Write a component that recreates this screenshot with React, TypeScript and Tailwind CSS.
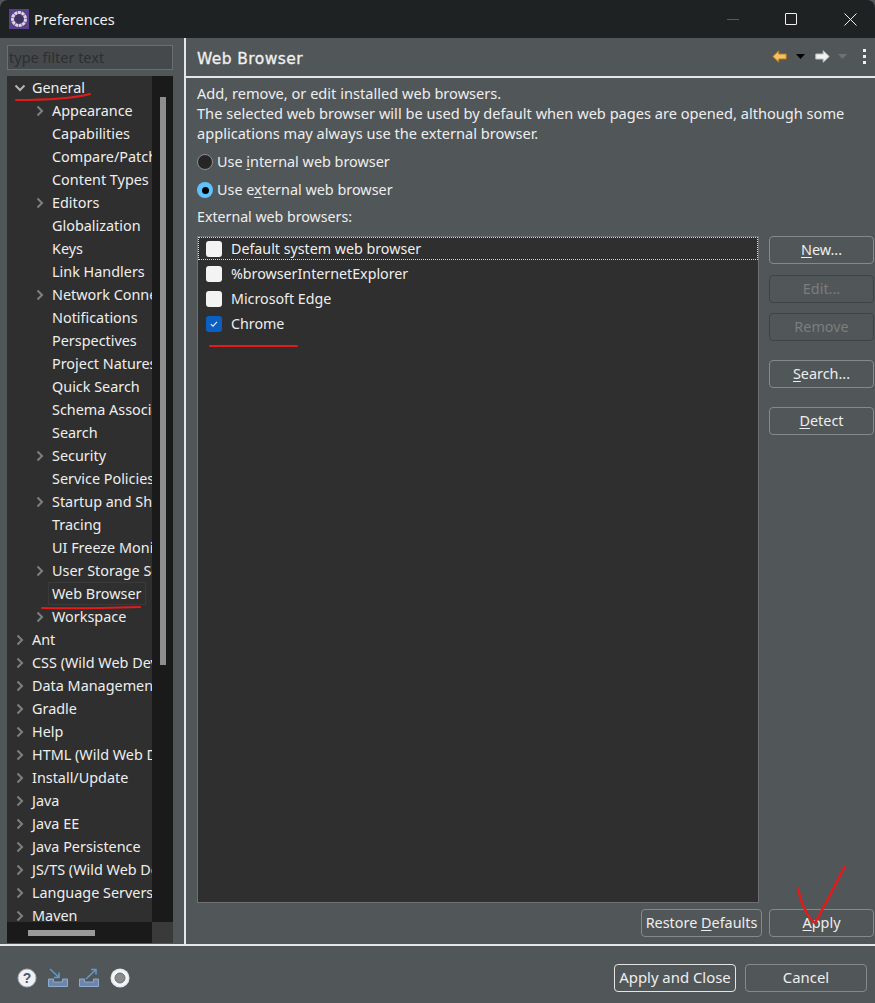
import React from "react";

type Row = { t: string; d: 0 | 1; c?: "open" | "closed" };
const rows: Row[] = [
  { t: "General", d: 0, c: "open" },
  { t: "Appearance", d: 1, c: "closed" },
  { t: "Capabilities", d: 1 },
  { t: "Compare/Patch", d: 1 },
  { t: "Content Types", d: 1 },
  { t: "Editors", d: 1, c: "closed" },
  { t: "Globalization", d: 1 },
  { t: "Keys", d: 1 },
  { t: "Link Handlers", d: 1 },
  { t: "Network Connections", d: 1, c: "closed" },
  { t: "Notifications", d: 1 },
  { t: "Perspectives", d: 1 },
  { t: "Project Natures", d: 1 },
  { t: "Quick Search", d: 1 },
  { t: "Schema Associations", d: 1 },
  { t: "Search", d: 1 },
  { t: "Security", d: 1, c: "closed" },
  { t: "Service Policies", d: 1 },
  { t: "Startup and Shutdown", d: 1, c: "closed" },
  { t: "Tracing", d: 1 },
  { t: "UI Freeze Monitoring", d: 1 },
  { t: "User Storage Service", d: 1, c: "closed" },
  { t: "Web Browser", d: 1 },
  { t: "Workspace", d: 1, c: "closed" },
  { t: "Ant", d: 0, c: "closed" },
  { t: "CSS (Wild Web Developer)", d: 0, c: "closed" },
  { t: "Data Management", d: 0, c: "closed" },
  { t: "Gradle", d: 0, c: "closed" },
  { t: "Help", d: 0, c: "closed" },
  { t: "HTML (Wild Web Developer)", d: 0, c: "closed" },
  { t: "Install/Update", d: 0, c: "closed" },
  { t: "Java", d: 0, c: "closed" },
  { t: "Java EE", d: 0, c: "closed" },
  { t: "Java Persistence", d: 0, c: "closed" },
  { t: "JS/TS (Wild Web Developer)", d: 0, c: "closed" },
  { t: "Language Servers", d: 0, c: "closed" },
  { t: "Maven", d: 0, c: "closed" },
];

function Twisty({ open }: { open?: boolean }) {
  return (
    <svg width="12" height="12" viewBox="0 0 12 12" fill="none" stroke={open ? "#b5b5b5" : "#7d8082"} strokeWidth="2">
      {open ? <path d="M1.5 3.5 L6 8 L10.5 3.5" /> : <path d="M3.5 1.5 L8 6 L3.5 10.5" />}
    </svg>
  );
}

function TreeRow({ r }: { r: Row }) {
  const selected = r.t === "Web Browser";
  return (
    <div className={`h-[23px] flex items-center whitespace-nowrap ${r.d ? "pl-[27px]" : "pl-[7px]"}`}>
      <span className="w-[18px] h-[12px] shrink-0 flex items-center justify-start">
        {r.c && <Twisty open={r.c === "open"} />}
      </span>
      <span className={selected ? "border border-[#3a3a3a] px-[3px] -ml-[4px] h-[23px] leading-[21px]" : ""}>{r.t}</span>
    </div>
  );
}

function Btn({ children, disabled, strong, className = "" }: { children: React.ReactNode; disabled?: boolean; strong?: boolean; className?: string }) {
  const tone = disabled
    ? "border-[#3f4345] text-[#7a7e80]"
    : strong
    ? "border-[#e4e4e4] text-[#eeeeee]"
    : "border-[#85898b] text-[#eeeeee]";
  return (
    <div className={`h-[28px] rounded-[4px] border flex items-center justify-center whitespace-nowrap ${tone} ${className}`}>
      {children}
    </div>
  );
}

function Check({ checked }: { checked?: boolean }) {
  return checked ? (
    <span className="w-[16px] h-[16px] rounded-[3px] bg-[#0a5fc0] flex items-center justify-center shrink-0">
      <svg width="10" height="10" viewBox="0 0 10 10" fill="none" stroke="#e8f0fa" strokeWidth="1.1">
        <path d="M1.8 5.2 L4 7.2 L8 2.8" />
      </svg>
    </span>
  ) : (
    <span className="w-[16px] h-[16px] rounded-[3px] bg-[#f3f3f3] shrink-0" />
  );
}

function ListRow({ label, checked, focus }: { label: string; checked?: boolean; focus?: boolean }) {
  return (
    <div className={`flex items-center gap-[9px] pl-[7px] text-[14.25px] ${focus ? "h-[23px] mb-px border border-dotted border-[#d8d8d8]" : "h-[25px] border border-transparent"}`}>
      <Check checked={checked} />
      <span>{label}</span>
    </div>
  );
}

function Arrow({ color, edge, flip }: { color: string; edge: string; flip?: boolean }) {
  return (
    <svg width="15" height="13" viewBox="0 0 15 13" style={flip ? { transform: "scaleX(-1)" } : undefined}>
      <path d="M0.8 6.5 L6.8 0.8 V4 H14.2 V9 H6.8 V12.2 Z" fill={color} stroke={edge} strokeWidth="1" />
    </svg>
  );
}

function Caret({ color }: { color: string }) {
  return (
    <svg width="9" height="5" viewBox="0 0 9 5">
      <path d="M0 0 H9 L4.5 5 Z" fill={color} />
    </svg>
  );
}

export default function App() {
  return (
    <div className="relative w-[875px] h-[1003px] overflow-hidden flex flex-col bg-[#515658] text-[#eeeeee] text-[14.4px] font-['Noto_Sans',sans-serif]">
      {/* Title bar */}
      <div className="h-[38px] shrink-0 bg-[#1f2223] flex items-center pl-[9px] rounded-t-[8px]">
        <svg width="20" height="20" viewBox="0 0 20 20">
          <rect width="20" height="20" fill="#5a3f8a" />
          <circle cx="10" cy="10" r="6.5" fill="none" stroke="#d8d8dc" strokeWidth="3" strokeDasharray="3 0.6" />
          <circle cx="10" cy="10" r="4.4" fill="#3d3560" />
        </svg>
        <span className="ml-[5px] pt-[1px] text-[14.5px] text-[#f0f0f0]">Preferences</span>
        <div className="ml-auto flex items-center">
          <span className="w-[12px] h-px bg-[#555a5c] mr-[46px]" />
          <span className="w-[12px] h-[12px] border border-[#f0f0f0] rounded-[1px] mr-[47px]" />
          <svg width="13" height="13" viewBox="0 0 13 13" stroke="#f0f0f0" strokeWidth="1" className="mr-[18px]">
            <path d="M0.5 0.5 L12.5 12.5 M12.5 0.5 L0.5 12.5" />
          </svg>
        </div>
      </div>

      <div className="flex-1 min-h-0 flex">
        {/* Left */}
        <div className="w-[184px] shrink-0 pl-[7px] pr-[11px] flex flex-col">
          <div className="mt-[7px] h-[25px] border border-[#6a6e70] bg-[#45494b] text-[#2c2f30] px-px flex items-center text-[14.5px]">
            type filter text
          </div>
          <div className="mt-[6px] h-[867px] grid grid-cols-[145px_21px] grid-rows-[846px_21px]">
            <div className="bg-[#2f2f2f] overflow-hidden">
              {rows.map((r) => (
                <TreeRow key={r.t} r={r} />
              ))}
            </div>
            <div className="bg-[#1a1a1a] pt-[21px] pl-[8px]">
              <div className="w-[6px] h-[568px] bg-[#8e8e8e]" />
            </div>
            <div className="bg-[#1a1a1a] pt-[8px] pl-[21px]">
              <div className="w-[67px] h-[6px] bg-[#9a9a9a]" />
            </div>
            <div className="bg-[#3a3a3a]" />
          </div>
        </div>

        {/* Right */}
        <div className="flex-1 min-w-0 border-l-2 border-[#e6e6e6] flex flex-col">
          <div className="h-[40px] shrink-0 flex items-center pl-[11px] border-b-2 border-[#e6e6e6] -mb-[2px]">
            <span className="pt-[5px] font-['DejaVu_Sans',sans-serif] text-[15.5px] tracking-[0.4px] text-[#f0f0f0] [-webkit-text-stroke:0.3px_#f0f0f0]">Web Browser</span>
            <div className="ml-auto flex items-center pr-[9px] pb-[2px]">
              <Arrow color="#f3c267" edge="#b97a12" />
              <span className="ml-[9px]"><Caret color="#000000" /></span>
              <span className="ml-[10px]"><Arrow color="#f2f2f2" edge="#c0c0c0" flip /></span>
              <span className="ml-[8px]"><Caret color="#6d7274" /></span>
              <span className="ml-[16px] flex flex-col gap-[3px]">
                <i className="w-[3px] h-[3px] bg-[#f0f0f0] block" />
                <i className="w-[3px] h-[3px] bg-[#f0f0f0] block" />
                <i className="w-[3px] h-[3px] bg-[#f0f0f0] block" />
              </span>
            </div>
          </div>

          <div className="flex-1 min-h-0 pl-[11px] flex flex-col">
            <div className="mt-[7px] leading-[20px] whitespace-nowrap text-[14.6px]">
              <div>Add, remove, or edit installed web browsers.</div>
              <div>The selected web browser will be used by default when web pages are opened, although some</div>
              <div>applications may always use the external browser.</div>
            </div>
            <div className="mt-[5px] h-[28px] flex items-center gap-[4px]">
              <span className="w-[16px] h-[16px] rounded-full bg-[#262626] border border-[#8f8f8f]" />
              <span>Use <u className="underline-offset-2">i</u>nternal web browser</span>
            </div>
            <div className="h-[28px] flex items-center gap-[4px]">
              <span className="w-[16px] h-[16px] rounded-full bg-[#5fc3fb] flex items-center justify-center">
                <span className="w-[7px] h-[7px] rounded-full bg-black" />
              </span>
              <span>Use e<u className="underline-offset-2">x</u>ternal web browser</span>
            </div>
            <div className="mt-[3px] h-[20px] leading-[20px] text-[14.2px]">External web browsers:</div>

            <div className="mt-[9px] flex gap-[10px] pr-[1px]">
              <div className="w-[562px] h-[667px] bg-[#2f2f2f] border border-[#6d7173]">
                <ListRow label="Default system web browser" focus />
                <ListRow label="%browserInternetExplorer" />
                <ListRow label="Microsoft Edge" />
                <ListRow label="Chrome" checked />
              </div>
              <div className="w-[105px] flex flex-col">
                <Btn><span><u className="underline-offset-2">N</u>ew...</span></Btn>
                <Btn disabled className="mt-[11px]">Edit...</Btn>
                <Btn disabled className="mt-[10px]">Remove</Btn>
                <Btn className="mt-[19px]"><span><u className="underline-offset-2">S</u>earch...</span></Btn>
                <Btn className="mt-[19px]"><span><u className="underline-offset-2">D</u>etect</span></Btn>
              </div>
            </div>

            <div className="mt-[6px] flex justify-end gap-[7px] pr-[1px]">
              <Btn className="w-[121px]"><span>Restore <u className="underline-offset-2">D</u>efaults</span></Btn>
              <Btn className="w-[105px]"><span><u className="underline-offset-2">A</u>pply</span></Btn>
            </div>
          </div>
        </div>
      </div>

      {/* Footer */}
      <div className="h-[59px] shrink-0 border-t-2 border-[#e6e6e6] flex items-center pt-[6px] pl-[17px] pr-[8px]">
        <svg width="20" height="20" viewBox="0 0 20 20">
          <circle cx="10" cy="10" r="9" fill="#eef0f4" stroke="#a8b0c0" />
          <text x="10" y="15" textAnchor="middle" fontSize="14" fontWeight="700" fontFamily="Liberation Sans" fill="#4c5668">?</text>
        </svg>
        <svg width="22" height="20" viewBox="0 0 22 20" className="ml-[10px]" fill="none">
          <path d="M1.5 11 V18.5 H20.5 V11 H15.5 V14 H6.5 V11 Z" fill="#6d86ab" stroke="#8fa9cf" strokeWidth="1" />
          <path d="M3 1 L12 9.5 M12 4.5 V9.5 H7" stroke="#5f9ad0" strokeWidth="1.5" />
        </svg>
        <svg width="22" height="20" viewBox="0 0 22 20" className="ml-[9px]" fill="none">
          <path d="M1.5 11 V18.5 H20.5 V11 H15.5 V14 H6.5 V11 Z" fill="#6d86ab" stroke="#8fa9cf" strokeWidth="1" />
          <path d="M8 11 L18 1.5 M13 1.5 H18 V6.5" stroke="#5f9ad0" strokeWidth="1.5" />
        </svg>
        <svg width="20" height="20" viewBox="0 0 20 20" className="ml-[10px]">
          <circle cx="10" cy="10" r="9.5" fill="#dfeaf5" />
          <circle cx="10" cy="10" r="8" fill="#f4f6f8" />
          <circle cx="10" cy="10" r="5" fill="#8a8a8a" stroke="#6c6c6c" />
        </svg>
        <div className="ml-auto flex gap-[9px] text-[14.9px]">
          <Btn strong className="w-[122px]">Apply and Close</Btn>
          <Btn className="w-[122px]">Cancel</Btn>
        </div>
      </div>

      {/* Red pen annotations */}
      <svg className="absolute inset-0 pointer-events-none" width="875" height="1003" viewBox="0 0 875 1003" fill="none" stroke="#e31b1b" strokeLinecap="round" strokeLinejoin="round">
        <path d="M16 100 C40 100 70 99 90 94" strokeWidth="2" />
        <path d="M42 608 C75 609 110 608 140 607" strokeWidth="2" />
        <path d="M210 346 L297 346" strokeWidth="2" />
        <path d="M798 889 C802 905 808 918 815 923 C825 905 835 885 845 866" strokeWidth="2.5" />
      </svg>
    </div>
  );
}
